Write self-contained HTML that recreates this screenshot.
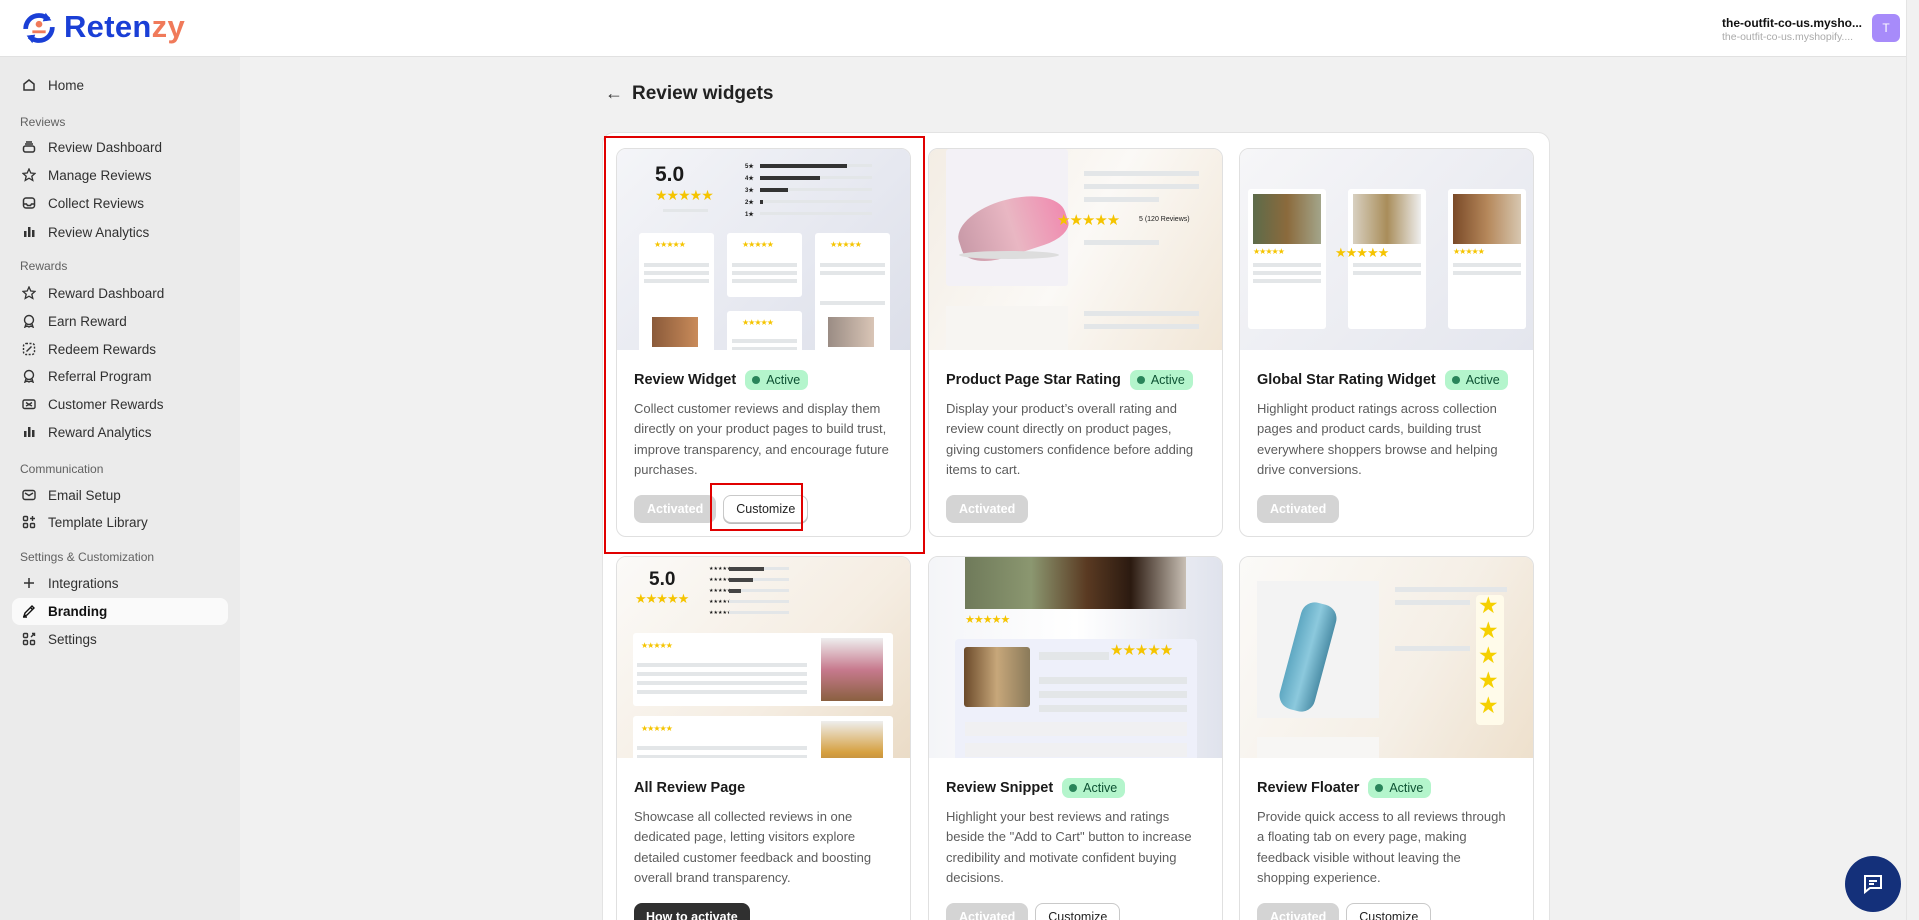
<!DOCTYPE html>
<html><head><meta charset="utf-8"><style>
*{box-sizing:border-box;margin:0;padding:0}
html,body{width:1919px;height:920px;overflow:hidden}
body{background:#f1f1f1;font-family:"Liberation Sans",sans-serif;position:relative;color:#1a1a1a}
.hdr{position:absolute;left:0;top:0;width:1906px;height:57px;background:#fff;border-bottom:1px solid #e1e1e1}
.sb{position:absolute;left:0;top:57px;width:240px;height:863px;background:#ebebeb}
.scr{position:absolute;left:1906px;top:0;width:13px;height:920px;background:#f1f1f1;border-left:1px solid #e4e4e4}
.it{position:absolute;left:12px;width:216px;height:27px;font-size:13.5px;color:#303030;line-height:27px;padding-left:36px}
.it svg{position:absolute;left:10px;top:6px}
.lb{position:absolute;left:20px;font-size:12px;color:#616161}
.wrap{position:absolute;left:602px;top:132px;width:948px;height:800px;background:#fff;border:1px solid #e3e3e3;border-radius:12px}
.card{position:absolute;width:295px;height:389px;background:#fff;border:1px solid #e0e0e0;border-radius:10px;overflow:hidden}
.img{position:absolute;left:0;top:0;width:295px;height:201px;overflow:hidden}
.ttl{position:absolute;left:17px;top:221px;font-size:14.5px;font-weight:bold;display:flex;align-items:center;gap:9px;white-space:nowrap}
.bd{font-weight:normal;font-size:12.5px;color:#0c5132;background:#b4f5cc;border-radius:7px;padding:3px 8px 3px 7px;display:flex;align-items:center;gap:6px}
.bd i{width:8px;height:8px;border-radius:50%;background:#29845a;display:block}
.ds{position:absolute;left:17px;top:250px;width:258px;font-size:13px;line-height:20.3px;color:#5c5c5c}
.btns{position:absolute;left:17px;top:346px;display:flex;gap:7px}
.b1{height:28px;padding:0 13px;border-radius:8px;background:#d4d4d4;color:#fff;font-size:12.5px;line-height:28px;font-weight:bold}
.b2{height:28px;padding:0 12px;border-radius:8px;background:#fff;border:1px solid #c9c9c9;color:#222;font-size:12.5px;line-height:26px;box-shadow:0 1px 0 #bbb}
.b3{height:28px;padding:0 12px;border-radius:8px;background:#303030;color:#fff;font-size:12.5px;line-height:28px;font-weight:bold}
.bar{position:absolute;height:6px;background:#e3e6e8}
.st{color:#f5c400;letter-spacing:-1px}
.wc{position:absolute;background:#fff;border-radius:3px}
</style></head><body>
<div class="hdr">
 <svg style="position:absolute;left:20px;top:8px" width="38" height="40" viewBox="0 0 40 42"><path d="M6 22a14 14 0 0 1 24-10" stroke="#1a3fd6" stroke-width="5" fill="none"/><path d="M34 20a14 14 0 0 1-24 10" stroke="#1a3fd6" stroke-width="5" fill="none"/><path d="M27 5l6 8-9 1z" fill="#1a3fd6"/><path d="M13 37l-6-8 9-1z" fill="#1a3fd6"/><circle cx="20" cy="17" r="3.5" fill="#f07a5a"/><path d="M13 25h14" stroke="#f07a5a" stroke-width="3"/></svg>
 <div style="position:absolute;left:64px;top:9px;font-size:31px;font-weight:bold;color:#1a3fd6;letter-spacing:0.3px">Reten<span style="color:#f07a5a">zy</span></div>
 <div style="position:absolute;left:1722px;top:16px;width:145px;white-space:nowrap;overflow:hidden">
  <div style="font-size:12px;font-weight:bold;color:#111">the-outfit-co-us.mysho...</div>
  <div style="font-size:10.5px;color:#aaa;margin-top:1px">the-outfit-co-us.myshopify....</div>
 </div>
 <div style="position:absolute;left:1872px;top:14px;width:28px;height:28px;border-radius:6px;background:#a78bfa;color:#fff;font-size:12px;text-align:center;line-height:28px">T</div>
</div>
<div class="scr"></div>
<div class="sb">
 <div class="it" style="top:15px"><svg width="14" height="14" viewBox="0 0 14 14" fill="none" stroke="#333" stroke-width="1.5"><path d="M2 6l5-4 5 4v6H2z"/></svg>Home</div>
 <div class="lb" style="top:58px">Reviews</div>
 <div class="it" style="top:77px"><svg width="14" height="14" viewBox="0 0 14 14" fill="none" stroke="#333" stroke-width="1.5"><rect x="1.5" y="6" width="11" height="6" rx="2"/><path d="M3 4h8M4 2h6"/></svg>Review Dashboard</div>
 <div class="it" style="top:105px"><svg width="14" height="14" viewBox="0 0 14 14" fill="none" stroke="#333" stroke-width="1.3"><path d="M7 1l1.8 4 4.2.4-3.2 2.8 1 4.2L7 10.2 3.2 12.4l1-4.2L1 5.4l4.2-.4z"/></svg>Manage Reviews</div>
 <div class="it" style="top:133px"><svg width="14" height="14" viewBox="0 0 14 14" fill="none" stroke="#333" stroke-width="1.5"><rect x="1.5" y="2" width="11" height="10" rx="2.5"/><path d="M1.5 8h3l1 1.5h3l1-1.5h3"/></svg>Collect Reviews</div>
 <div class="it" style="top:162px"><svg width="14" height="14" viewBox="0 0 14 14" fill="#333"><rect x="2" y="6" width="2.5" height="6"/><rect x="6" y="2" width="2.5" height="10"/><rect x="10" y="5" width="2.5" height="7"/></svg>Review Analytics</div>
 <div class="lb" style="top:202px">Rewards</div>
 <div class="it" style="top:223px"><svg width="14" height="14" viewBox="0 0 14 14" fill="none" stroke="#333" stroke-width="1.3"><path d="M7 1l1.8 4 4.2.4-3.2 2.8 1 4.2L7 10.2 3.2 12.4l1-4.2L1 5.4l4.2-.4z"/></svg>Reward Dashboard</div>
 <div class="it" style="top:251px"><svg width="14" height="14" viewBox="0 0 14 14" fill="none" stroke="#333" stroke-width="1.4"><circle cx="7" cy="6" r="4.5"/><path d="M4 10l-1 3 2-1 2 1 2-1 2 1-1-3"/></svg>Earn Reward</div>
 <div class="it" style="top:279px"><svg width="14" height="14" viewBox="0 0 14 14" fill="none" stroke="#333" stroke-width="1.4" stroke-dasharray="2 1.5"><rect x="1.5" y="1.5" width="11" height="11" rx="2.5"/><path d="M4.5 9.5l5-5" stroke-dasharray="none"/></svg>Redeem Rewards</div>
 <div class="it" style="top:306px"><svg width="14" height="14" viewBox="0 0 14 14" fill="none" stroke="#333" stroke-width="1.4"><circle cx="7" cy="6" r="4.5"/><path d="M4 10l-1 3 2-1 2 1 2-1 2 1-1-3"/></svg>Referral Program</div>
 <div class="it" style="top:334px"><svg width="14" height="14" viewBox="0 0 14 14" fill="none" stroke="#333" stroke-width="1.4"><rect x="1" y="3" width="12" height="8.5" rx="1.5"/><path d="M4 5.5l3 2 3-2M4 9l3-1.5 3 1.5"/></svg>Customer Rewards</div>
 <div class="it" style="top:362px"><svg width="14" height="14" viewBox="0 0 14 14" fill="#333"><rect x="2" y="6" width="2.5" height="6"/><rect x="6" y="2" width="2.5" height="10"/><rect x="10" y="5" width="2.5" height="7"/></svg>Reward Analytics</div>
 <div class="lb" style="top:405px">Communication</div>
 <div class="it" style="top:425px"><svg width="14" height="14" viewBox="0 0 14 14" fill="none" stroke="#333" stroke-width="1.4"><rect x="1" y="2.5" width="12" height="9" rx="2"/><path d="M3 5l4 2.5L11 5"/></svg>Email Setup</div>
 <div class="it" style="top:452px"><svg width="14" height="14" viewBox="0 0 14 14" fill="none" stroke="#333" stroke-width="1.4"><rect x="1.5" y="1.5" width="4" height="4" rx="1"/><rect x="1.5" y="8.5" width="4" height="4" rx="1"/><rect x="8.5" y="8.5" width="4" height="4" rx="1"/><path d="M10.5 1v5M8 3.5h5"/></svg>Template Library</div>
 <div class="lb" style="top:493px">Settings &amp; Customization</div>
 <div class="it" style="top:513px"><svg width="14" height="14" viewBox="0 0 14 14" fill="none" stroke="#333" stroke-width="1.5"><path d="M7 2v10M2 7h10"/></svg>Integrations</div>
 <div class="it" style="top:541px;background:#fafafa;border-radius:8px;font-weight:bold;color:#111"><svg width="14" height="14" viewBox="0 0 14 14" fill="none" stroke="#111" stroke-width="1.4"><path d="M2 12l3-1 7-7-2-2-7 7zM8 3l3 3M1 13h4"/></svg>Branding</div>
 <div class="it" style="top:569px"><svg width="14" height="14" viewBox="0 0 14 14" fill="none" stroke="#333" stroke-width="1.4"><rect x="1.5" y="1.5" width="4" height="4" rx="1"/><rect x="1.5" y="8.5" width="4" height="4" rx="1"/><rect x="8.5" y="8.5" width="4" height="4" rx="1"/><path d="M9 5l3.5-3.5M10 1.5h2.5V4"/></svg>Settings</div>
</div>

<div style="position:absolute;left:605px;top:83px;font-size:18px;color:#333">&#8592;</div>
<div style="position:absolute;left:632px;top:83px;font-size:19px;font-weight:bold;color:#222">Review widgets</div>

<div class="wrap"></div>

<div class="card" style="left:616px;top:148px">
 <div class="img" style="background:linear-gradient(135deg,#f4f5f8,#e6e8f0 60%,#dcdfe9)">
  <div style="position:absolute;left:38px;top:14px;font-size:21px;font-weight:bold">5.0</div>
  <div class="st" style="position:absolute;left:38px;top:38px;font-size:14px">★★★★★</div>
  <div class="bar" style="left:46px;top:60px;width:45px;height:3px"></div>
  <div style="position:absolute;left:128px;top:12px;font-size:6px;line-height:12px;font-weight:bold">5★<br>4★<br>3★<br>2★<br>1★</div>
  <div class="bar" style="left:143px;top:15px;width:112px;height:3px"></div><div class="bar" style="left:143px;top:15px;width:87px;height:4px;background:#333"></div>
  <div class="bar" style="left:143px;top:27px;width:112px;height:3px"></div><div class="bar" style="left:143px;top:27px;width:60px;height:4px;background:#333"></div>
  <div class="bar" style="left:143px;top:39px;width:112px;height:3px"></div><div class="bar" style="left:143px;top:39px;width:28px;height:4px;background:#333"></div>
  <div class="bar" style="left:143px;top:51px;width:112px;height:3px"></div><div class="bar" style="left:143px;top:51px;width:3px;height:4px;background:#333"></div>
  <div class="bar" style="left:143px;top:63px;width:112px;height:3px"></div>
  <div class="wc" style="left:22px;top:84px;width:75px;height:122px"><div class="st" style="position:absolute;left:15px;top:7px;font-size:8px">★★★★★</div><div class="bar" style="left:5px;top:30px;width:65px;height:4px"></div><div class="bar" style="left:5px;top:38px;width:65px;height:4px"></div><div class="bar" style="left:5px;top:46px;width:65px;height:4px"></div><div style="position:absolute;left:13px;top:84px;width:46px;height:30px;background:linear-gradient(90deg,#8a5a3a,#c98b5a)"></div></div>
  <div class="wc" style="left:110px;top:84px;width:75px;height:64px"><div class="st" style="position:absolute;left:15px;top:7px;font-size:8px">★★★★★</div><div class="bar" style="left:5px;top:30px;width:65px;height:4px"></div><div class="bar" style="left:5px;top:38px;width:65px;height:4px"></div><div class="bar" style="left:5px;top:46px;width:65px;height:4px"></div></div>
  <div class="wc" style="left:198px;top:84px;width:75px;height:122px"><div class="st" style="position:absolute;left:15px;top:7px;font-size:8px">★★★★★</div><div class="bar" style="left:5px;top:30px;width:65px;height:4px"></div><div class="bar" style="left:5px;top:38px;width:65px;height:4px"></div><div class="bar" style="left:5px;top:68px;width:65px;height:4px"></div><div style="position:absolute;left:13px;top:84px;width:46px;height:30px;background:linear-gradient(90deg,#9a8c84,#d9c5b6)"></div></div>
  <div class="wc" style="left:110px;top:162px;width:75px;height:60px"><div class="st" style="position:absolute;left:15px;top:7px;font-size:8px">★★★★★</div><div class="bar" style="left:5px;top:28px;width:65px;height:4px"></div><div class="bar" style="left:5px;top:36px;width:65px;height:4px"></div></div>
  <div class="wc" style="left:22px;top:215px;width:75px;height:20px"></div>
  <div class="wc" style="left:198px;top:214px;width:75px;height:20px"></div>
 </div>
 <div class="ttl">Review Widget<span class="bd"><i></i>Active</span></div>
 <div class="ds">Collect customer reviews and display them directly on your product pages to build trust, improve transparency, and encourage future purchases.</div>
 <div class="btns"><span class="b1">Activated</span><span class="b2">Customize</span></div>
</div>

<div class="card" style="left:928px;top:148px">
 <div class="img" style="background:linear-gradient(120deg,#f3ede4,#fbf9f6 50%,#f1e6d6)">
  <div style="position:absolute;left:17px;top:0;width:122px;height:137px;background:#f3f1f6;border-radius:3px"></div>
  <div style="position:absolute;left:28px;top:50px;width:110px;height:55px;border-radius:50% 60% 30% 40%;background:linear-gradient(90deg,#c99aa8,#e9b7c3,#f08bb0);transform:rotate(-18deg)"></div>
  <div style="position:absolute;left:30px;top:102px;width:100px;height:8px;border-radius:50%;background:#ddd"></div>
  <div class="st" style="position:absolute;left:128px;top:62px;font-size:15px">★★★★★</div>
  <div style="position:absolute;left:210px;top:67px;font-size:7px">5 (120 Reviews)</div>
  <div class="bar" style="left:155px;top:22px;width:115px;height:5px"></div><div class="bar" style="left:155px;top:35px;width:115px;height:5px"></div><div class="bar" style="left:155px;top:48px;width:75px;height:5px"></div><div class="bar" style="left:155px;top:91px;width:75px;height:5px"></div>
  <div style="position:absolute;left:17px;top:157px;width:122px;height:50px;background:#f7f5f2"></div>
  <div class="bar" style="left:155px;top:162px;width:115px;height:5px"></div><div class="bar" style="left:155px;top:175px;width:115px;height:5px"></div>
 </div>
 <div class="ttl">Product Page Star Rating<span class="bd"><i></i>Active</span></div>
 <div class="ds">Display your product’s overall rating and review count directly on product pages, giving customers confidence before adding items to cart.</div>
 <div class="btns"><span class="b1">Activated</span></div>
</div>

<div class="card" style="left:1239px;top:148px">
 <div class="img" style="background:linear-gradient(135deg,#f6f6f8,#e4e6ee)">
  <div class="wc" style="left:8px;top:40px;width:78px;height:140px"><div style="position:absolute;left:5px;top:5px;width:68px;height:50px;background:linear-gradient(90deg,#5d6b4a,#8b6a3c,#a3a58a)"></div><div class="st" style="position:absolute;left:5px;top:58px;font-size:8px">★★★★★</div><div class="bar" style="left:5px;top:74px;width:68px;height:4px"></div><div class="bar" style="left:5px;top:82px;width:68px;height:4px"></div><div class="bar" style="left:5px;top:90px;width:68px;height:4px"></div></div>
  <div class="wc" style="left:108px;top:40px;width:78px;height:140px"><div style="position:absolute;left:5px;top:5px;width:68px;height:50px;background:linear-gradient(90deg,#d8d0c0,#a98d5a,#eee)"></div><div class="st" style="position:absolute;left:-13px;top:56px;font-size:13px">★★★★★</div><div class="bar" style="left:5px;top:74px;width:68px;height:4px"></div><div class="bar" style="left:5px;top:82px;width:68px;height:4px"></div></div>
  <div class="wc" style="left:208px;top:40px;width:78px;height:140px"><div style="position:absolute;left:5px;top:5px;width:68px;height:50px;background:linear-gradient(90deg,#7a4a28,#b5875a,#d7c7b0)"></div><div class="st" style="position:absolute;left:5px;top:58px;font-size:8px">★★★★★</div><div class="bar" style="left:5px;top:74px;width:68px;height:4px"></div><div class="bar" style="left:5px;top:82px;width:68px;height:4px"></div></div>
 </div>
 <div class="ttl">Global Star Rating Widget<span class="bd"><i></i>Active</span></div>
 <div class="ds">Highlight product ratings across collection pages and product cards, building trust everywhere shoppers browse and helping drive conversions.</div>
 <div class="btns"><span class="b1">Activated</span></div>
</div>

<div class="card" style="left:616px;top:556px">
 <div class="img" style="background:linear-gradient(135deg,#fbfaf8,#f5ede2 60%,#eadbc6)">
  <div style="position:absolute;left:32px;top:12px;font-size:19px;font-weight:bold">5.0</div>
  <div class="st" style="position:absolute;left:18px;top:34px;font-size:13px">★★★★★</div>
  <div style="position:absolute;left:92px;top:7px;font-size:5px;line-height:11px">★★★★★<br>★★★★★<br>★★★★★<br>★★★★★<br>★★★★★</div>
  <div class="bar" style="left:112px;top:10px;width:60px;height:3px"></div><div class="bar" style="left:112px;top:10px;width:35px;height:4px;background:#444"></div>
  <div class="bar" style="left:112px;top:21px;width:60px;height:3px"></div><div class="bar" style="left:112px;top:21px;width:24px;height:4px;background:#444"></div>
  <div class="bar" style="left:112px;top:32px;width:60px;height:3px"></div><div class="bar" style="left:112px;top:32px;width:12px;height:4px;background:#444"></div>
  <div class="bar" style="left:112px;top:43px;width:60px;height:3px"></div><div class="bar" style="left:112px;top:54px;width:60px;height:3px"></div>
  <div class="wc" style="left:16px;top:76px;width:260px;height:73px"><div class="st" style="position:absolute;left:8px;top:8px;font-size:8px">★★★★★</div><div class="bar" style="left:4px;top:30px;width:170px;height:4px"></div><div class="bar" style="left:4px;top:39px;width:170px;height:4px"></div><div class="bar" style="left:4px;top:48px;width:170px;height:4px"></div><div class="bar" style="left:4px;top:57px;width:170px;height:4px"></div><div style="position:absolute;left:188px;top:5px;width:62px;height:63px;background:linear-gradient(180deg,#eee,#c77a8e 50%,#8a6040)"></div></div>
  <div class="wc" style="left:16px;top:159px;width:260px;height:73px"><div class="st" style="position:absolute;left:8px;top:8px;font-size:8px">★★★★★</div><div class="bar" style="left:4px;top:30px;width:170px;height:4px"></div><div class="bar" style="left:4px;top:39px;width:170px;height:4px"></div><div class="bar" style="left:4px;top:48px;width:170px;height:4px"></div><div style="position:absolute;left:188px;top:5px;width:62px;height:63px;background:linear-gradient(180deg,#eee,#d6a040 50%,#8a6040)"></div></div>
 </div>
 <div class="ttl" style="top:223px">All Review Page</div>
 <div class="ds">Showcase all collected reviews in one dedicated page, letting visitors explore detailed customer feedback and boosting overall brand transparency.</div>
 <div class="btns"><span class="b3">How to activate</span></div>
</div>

<div class="card" style="left:928px;top:556px">
 <div class="img" style="background:linear-gradient(90deg,#f4f5f8,#fff 50%,#dfe2ec)">
  <div style="position:absolute;left:36px;top:0;width:221px;height:52px;background:linear-gradient(90deg,#6f7a5a,#8b9770 30%,#5a3a22 55%,#2b1a10 75%,#c8bfb4)"></div>
  <div class="st" style="position:absolute;left:36px;top:56px;font-size:11px">★★★★★</div>
  <div style="position:absolute;left:26px;top:82px;width:242px;height:126px;background:#eef0fa;border-radius:4px"></div>
  <div style="position:absolute;left:35px;top:90px;width:66px;height:60px;background:linear-gradient(90deg,#6b4a2a,#c7a77a,#8a7a5a);border-radius:3px"></div>
  <div class="st" style="position:absolute;left:181px;top:84px;font-size:15px">★★★★★</div>
  <div class="bar" style="left:110px;top:95px;width:70px;height:8px"></div>
  <div class="bar" style="left:110px;top:120px;width:148px;height:7px"></div><div class="bar" style="left:110px;top:134px;width:148px;height:7px"></div><div class="bar" style="left:110px;top:148px;width:148px;height:7px"></div>
  <div class="bar" style="left:36px;top:165px;width:222px;height:14px;background:#f0f0f2"></div><div class="bar" style="left:36px;top:186px;width:222px;height:14px;background:#f0f0f2"></div>
 </div>
 <div class="ttl">Review Snippet<span class="bd"><i></i>Active</span></div>
 <div class="ds">Highlight your best reviews and ratings beside the "Add to Cart" button to increase credibility and motivate confident buying decisions.</div>
 <div class="btns"><span class="b1">Activated</span><span class="b2">Customize</span></div>
</div>

<div class="card" style="left:1239px;top:556px">
 <div class="img" style="background:linear-gradient(120deg,#fbfaf8,#f5efe6 60%,#eee0cc)">
  <div style="position:absolute;left:17px;top:24px;width:122px;height:137px;background:#f3f3f3"></div>
  <div style="position:absolute;left:50px;top:45px;width:36px;height:110px;border-radius:14px;background:linear-gradient(90deg,#5fa8c2,#8cc9dd,#4d8fa8);transform:rotate(15deg)"></div>
  <div class="bar" style="left:155px;top:30px;width:112px;height:5px"></div><div class="bar" style="left:155px;top:43px;width:75px;height:5px"></div><div class="bar" style="left:155px;top:89px;width:75px;height:5px"></div>
  <div style="position:absolute;left:17px;top:180px;width:122px;height:30px;background:#f7f6f4"></div>
  <div style="position:absolute;left:236px;top:38px;width:28px;height:130px;background:#fffbea;border-radius:4px"></div>
  <div style="position:absolute;left:238px;top:36px;font-size:23px;line-height:25px;color:#f5d000">★<br>★<br>★<br>★<br>★</div>
 </div>
 <div class="ttl">Review Floater<span class="bd"><i></i>Active</span></div>
 <div class="ds">Provide quick access to all reviews through a floating tab on every page, making feedback visible without leaving the shopping experience.</div>
 <div class="btns"><span class="b1">Activated</span><span class="b2">Customize</span></div>
</div>

<div style="position:absolute;left:604px;top:136px;width:321px;height:418px;border:2px solid #e00000"></div>
<div style="position:absolute;left:710px;top:483px;width:93px;height:48px;border:2px solid #e00000"></div>

<div style="position:absolute;left:1845px;top:856px;width:56px;height:56px;border-radius:50%;background:#14307a">
 <svg style="position:absolute;left:16px;top:16px" width="24" height="24" viewBox="0 0 24 24" fill="none" stroke="#fff" stroke-width="2"><path d="M4 4h16v12H9l-5 4z"/><path d="M8 9h8M8 12h5"/></svg>
</div>
</body></html>
